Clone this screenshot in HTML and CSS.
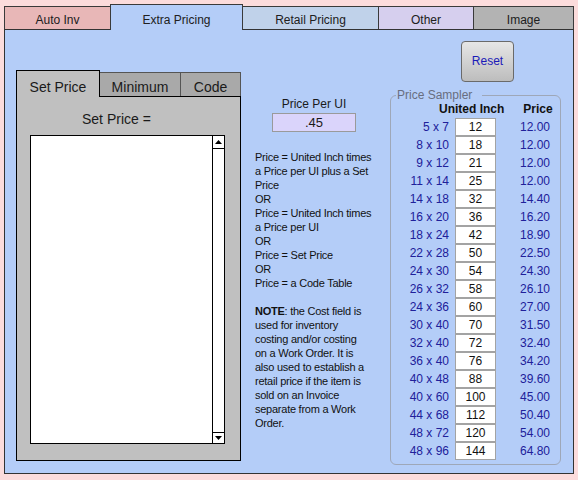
FILE: index.html
```html
<!DOCTYPE html>
<html>
<head>
<meta charset="utf-8">
<link rel="stylesheet" href="styles.css">
</head>
<body>
<div class="app">
  <div class="tabs">
    <div class="tab tab-auto">Auto Inv</div>
    <div class="tab tab-active">Extra Pricing</div>
    <div class="tab tab-retail">Retail Pricing</div>
    <div class="tab tab-other">Other</div>
    <div class="tab tab-image">Image</div>
  </div>
  <div class="panel">
    <div class="left">
      <div class="subtabs">
        <div class="subtab subtab-active">Set Price</div>
        <div class="subtab subtab-min">Minimum</div>
        <div class="subtab subtab-code">Code</div>
      </div>
      <div class="subbody">
        <div class="setprice-label">Set Price =</div>
        <div class="memo">
          <div class="memo-text"></div>
          <div class="scrollbar">
            <div class="sb-btn sb-up"><svg width="7" height="4" viewBox="0 0 7 4"><polygon points="0,4 7,4 3.5,0" fill="#000"/></svg></div>
            <div class="sb-track"></div>
            <div class="sb-btn sb-down"><svg width="7" height="4" viewBox="0 0 7 4"><polygon points="0,0 7,0 3.5,4" fill="#000"/></svg></div>
          </div>
        </div>
      </div>
    </div>
    <div class="middle">
      <div class="ppu-label">Price Per UI</div>
      <div class="ppu-input">.45</div>
      <div class="info">
        <p>Price = United Inch times<br>a Price per UI plus a Set<br>Price<br>OR<br>Price = United Inch times<br>a Price per UI<br>OR<br>Price = Set Price<br>OR<br>Price = a Code Table</p>
        <p><b>NOTE</b>: the Cost field is<br>used for inventory<br>costing and/or costing<br>on a Work Order. It is<br>also used to establish a<br>retail price if the item is<br>sold on an Invoice<br>separate from a Work<br>Order.</p>
      </div>
    </div>
    <div class="right">
      <div class="reset-btn">Reset</div>
      <fieldset class="sampler">
        <legend class="sampler-legend">Price Sampler</legend>
        <div class="sampler-head">
          <span class="head-ui">United Inch</span>
          <span class="head-price">Price</span>
        </div>
        <div class="sampler-grid">
          <div class="size">5 x 7</div><div class="ui">12</div><div class="price">12.00</div>
          <div class="size">8 x 10</div><div class="ui">18</div><div class="price">12.00</div>
          <div class="size">9 x 12</div><div class="ui">21</div><div class="price">12.00</div>
          <div class="size">11 x 14</div><div class="ui">25</div><div class="price">12.00</div>
          <div class="size">14 x 18</div><div class="ui">32</div><div class="price">14.40</div>
          <div class="size">16 x 20</div><div class="ui">36</div><div class="price">16.20</div>
          <div class="size">18 x 24</div><div class="ui">42</div><div class="price">18.90</div>
          <div class="size">22 x 28</div><div class="ui">50</div><div class="price">22.50</div>
          <div class="size">24 x 30</div><div class="ui">54</div><div class="price">24.30</div>
          <div class="size">26 x 32</div><div class="ui">58</div><div class="price">26.10</div>
          <div class="size">24 x 36</div><div class="ui">60</div><div class="price">27.00</div>
          <div class="size">30 x 40</div><div class="ui">70</div><div class="price">31.50</div>
          <div class="size">32 x 40</div><div class="ui">72</div><div class="price">32.40</div>
          <div class="size">36 x 40</div><div class="ui">76</div><div class="price">34.20</div>
          <div class="size">40 x 48</div><div class="ui">88</div><div class="price">39.60</div>
          <div class="size">40 x 60</div><div class="ui">100</div><div class="price">45.00</div>
          <div class="size">44 x 68</div><div class="ui">112</div><div class="price">50.40</div>
          <div class="size">48 x 72</div><div class="ui">120</div><div class="price">54.00</div>
          <div class="size">48 x 96</div><div class="ui">144</div><div class="price">64.80</div>
        </div>
      </fieldset>
    </div>
  </div>
</div>
</body>
</html>
```
FILE: styles.css
```css
* { box-sizing: border-box; }
html, body {
  margin: 0;
  padding: 0;
  background: #fcdcdc;
  font-family: "Liberation Sans", Arial, sans-serif;
  color: #1a1a1a;
}
.app {
  padding: 4px 0 0 4px;
  width: 578px;
}
.tabs {
  display: flex;
  align-items: flex-end;
}
.tab {
  height: 23px;
  border: 1px solid #3a3a3a;
  border-bottom: none;
  padding-top: 4px;
  line-height: 18px;
  font-size: 12px;
  text-align: center;
  color: #202020;
  margin-left: -1px;
}
.tab-auto { width: 107px; margin-left: 0; background: #e8b7b7; }
.tab-active {
  width: 133px;
  height: 26px;
  padding-top: 6px;
  margin-bottom: -1px;
  background: #b4cdf8;
  position: relative;
  z-index: 2;
}
.tab-retail { width: 137px; background: #c0d2ea; }
.tab-other { width: 96px; background: #d6cfee; }
.tab-image { width: 101px; background: #b3b3b3; }

.panel {
  width: 570px;
  height: 445px;
  border: 1px solid #333;
  background: #b4cdf8;
  display: flex;
  align-items: flex-start;
  padding: 11px 0 0 11px;
}

/* left sub-tab panel */
.left {
  width: 225px;
  height: 391px;
  margin-top: 29px;
  display: flex;
  flex-direction: column;
}
.subtabs {
  display: flex;
  align-items: flex-end;
}
.subtab {
  height: 24px;
  border: 1px solid #555;
  border-bottom: none;
  background: #a9a9a9;
  padding-top: 4px;
  line-height: 20px;
  font-size: 14px;
  text-align: center;
  color: #1a1a1a;
  margin-left: -1px;
}
.subtab-active {
  width: 84px;
  height: 27px;
  padding-top: 6px;
  margin-left: 0;
  margin-bottom: -1px;
  border-color: #000;
  background: #c0c0c0;
  position: relative;
  z-index: 2;
}
.subtab-min { width: 82px; }
.subtab-code { width: 61px; }
.subbody {
  flex: 1;
  border: 1px solid #000;
  background: #c0c0c0;
  padding: 14px 15px 16px 13px;
}
.setprice-label {
  font-size: 14px;
  line-height: 16px;
  margin-left: 52px;
  color: #1a1a1a;
}
.memo {
  margin-top: 8px;
  width: 195px;
  height: 309px;
  border: 1px solid #000;
  background: #fff;
  display: flex;
}
.memo-text { flex: 1; }
.scrollbar {
  width: 12px;
  border-left: 1px solid #000;
  display: flex;
  flex-direction: column;
}
.sb-btn {
  display: flex;
  align-items: center;
  justify-content: center;
}
.sb-up { height: 13px; border-bottom: 1px solid #000; }
.sb-track { flex: 1; }
.sb-down { height: 11px; border-top: 1px solid #000; }

/* middle column */
.middle {
  width: 118px;
  margin-left: 14px;
  margin-top: 56px;
}
.ppu-label {
  font-size: 12px;
  line-height: 14px;
  text-align: center;
  color: #1a1a1a;
}
.ppu-input {
  width: 84px;
  height: 19px;
  margin: 2px auto 0;
  border: 1px solid #9a9a9a;
  background: #dad4fb;
  font-size: 13px;
  line-height: 17px;
  text-align: center;
  color: #1a1a1a;
}
.info {
  margin-top: 18px;
  font-size: 11px;
  line-height: 14px;
  letter-spacing: -0.25px;
  color: #111;
  white-space: nowrap;
}
.info p { margin: 0 0 14px 0; }

/* right column */
.right {
  width: 171px;
  margin-left: 17px;
}
.reset-btn {
  margin-left: 71px;
  width: 53px;
  height: 41px;
  border: 1px solid #6a6a6a;
  border-radius: 4px;
  background: linear-gradient(#e6e6e6, #bdbdbd);
  color: #1c1ab8;
  font-size: 12px;
  line-height: 39px;
  text-align: center;
}
.sampler {
  margin: 6px 0 0 0;
  padding: 0 0 4px 0;
  border: 1px solid #9ea7b8;
  border-radius: 6px;
  min-width: 0;
}
.sampler-legend {
  margin-left: 5px;
  padding: 0 10px 0 1px;
  font-size: 12px;
  line-height: 14px;
  color: #686e80;
}
.sampler-head {
  display: flex;
  height: 15px;
  line-height: 15px;
  margin-bottom: 1px;
  font-size: 12px;
  font-weight: bold;
  color: #111;
}
.head-ui { margin-left: 48px; }
.head-price { margin-left: 19px; }
.sampler-grid {
  display: grid;
  grid-template-columns: 64px 41px 54px;
  grid-auto-rows: 18px;
  font-size: 12px;
}
.size {
  text-align: right;
  padding-right: 6px;
  line-height: 18px;
  color: #20209a;
}
.ui {
  border: 1px solid #a3a3a3;
  background: #fff;
  text-align: center;
  line-height: 16px;
  color: #111;
}
.price {
  text-align: right;
  line-height: 18px;
  color: #20209a;
}
```
